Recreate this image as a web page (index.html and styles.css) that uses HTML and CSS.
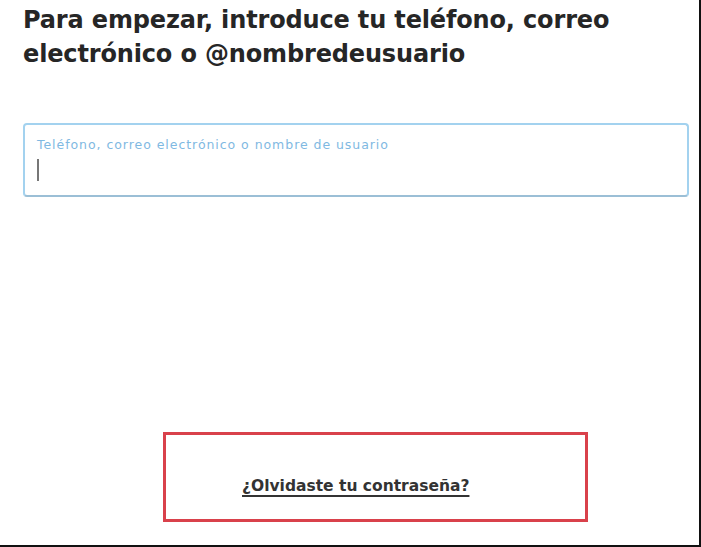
FILE: index.html
```html
<!DOCTYPE html>
<html lang="es">
<head>
<meta charset="utf-8">
<title>Iniciar sesión</title>
<link rel="stylesheet" href="styles.css">
</head>
<body>
<div class="page">
  <h1 class="title">Para empezar, introduce tu teléfono, correo electrónico o @nombredeusuario</h1>
  <div class="field">
    <label class="field-label">Teléfono, correo electrónico o nombre de usuario</label>
    <span class="caret"></span>
  </div>
  <div class="spacer"></div>
  <div class="highlight">
    <a class="forgot" href="#">¿Olvidaste tu contraseña?</a>
  </div>
</div>
</body>
</html>
```
FILE: styles.css
```css
* { box-sizing: border-box; }
html, body { margin: 0; padding: 0; background: #fff; }
body { font-family: "DejaVu Sans", "Liberation Sans", sans-serif; }
.page {
  width: 701px;
  height: 547px;
  border-right: 2px solid #111;
  border-bottom: 2px solid #111;
  display: flex;
  flex-direction: column;
  padding: 3px 12px 0 23px;
  overflow: hidden;
}
.title {
  margin: 0;
  font-size: 24px;
  line-height: 34px;
  font-weight: bold;
  color: #262626;
  letter-spacing: -0.15px;
  width: 620px;
}
.field {
  margin-top: 52px;
  width: 666px;
  height: 74px;
  border: 2px solid #a3d2ef;
  border-bottom-color: #9bbfd6;
  border-radius: 4px;
  padding: 13px 12px 0 12px;
  display: flex;
  flex-direction: column;
}
.field-label {
  font-size: 12.5px;
  line-height: 14px;
  letter-spacing: 0.95px;
  color: #7fb9e2;
}
.caret {
  margin-top: 7px;
  width: 2px;
  height: 22px;
  background: #777;
}
.spacer { height: 235px; flex: none; }
.highlight {
  margin-left: 140px;
  width: 425px;
  height: 90px;
  border: 3px solid #d9414b;
  padding: 41px 0 0 76px;
}
.forgot {
  font-size: 15.5px;
  line-height: 20px;
  font-weight: bold;
  color: #333;
  text-decoration: underline;
  text-decoration-thickness: 2px;
  text-underline-offset: 4px;
}
```
